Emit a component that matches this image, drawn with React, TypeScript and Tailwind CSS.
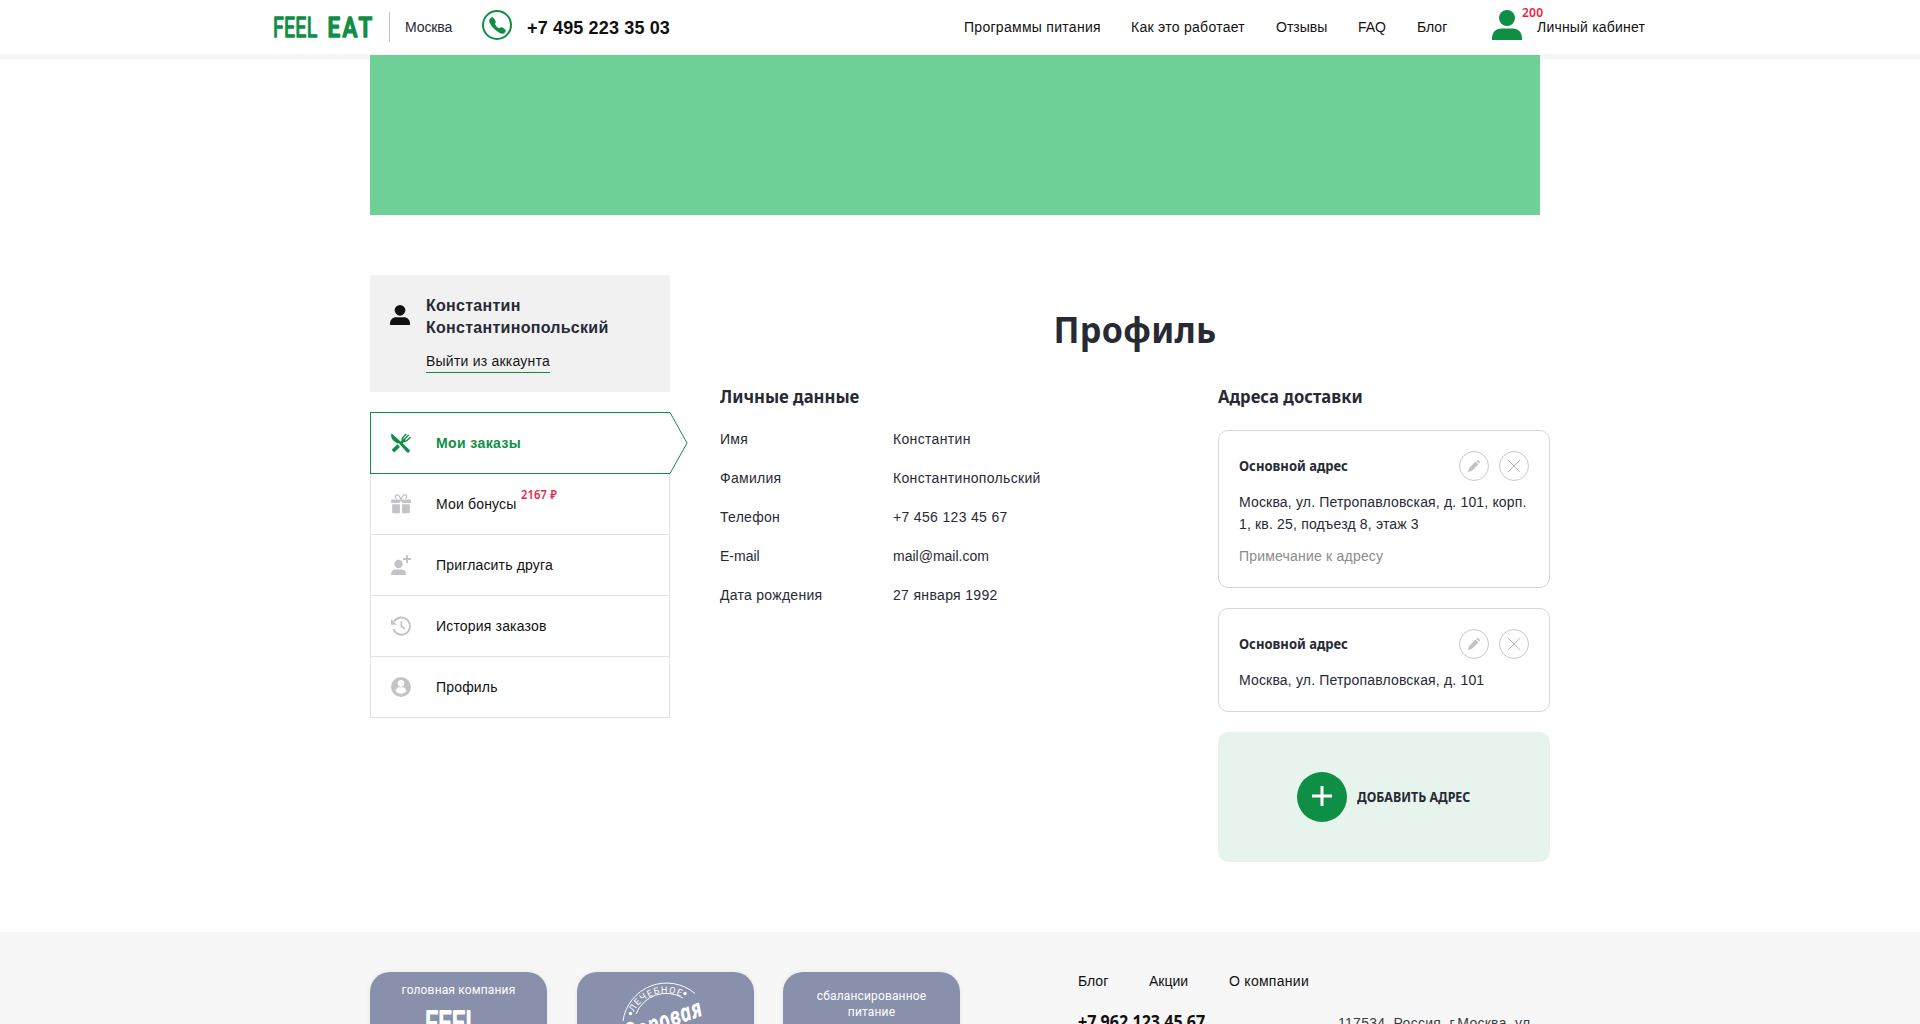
import React from "react";
import { IoCall } from "react-icons/io5";

function PersonIcon({ className }: { className: string }) {
  return (
    <svg viewBox="0 0 30 30" className={className} fill="currentColor">
      <circle cx="15" cy="8" r="8" />
      <path d="M0 30v-2c0-5.500 4-9.500 9-9.500h12c5 0 9 4 9 9.500v2z" />
    </svg>
  );
}

function CutleryIcon() {
  return (
    <svg viewBox="0 0 20 20" className="size-5" fill="none" stroke="currentColor" strokeLinecap="round">
      <path d="M.5.3c-.9 3.200.2 5.700 1.800 7.200l3.800 2.900 1.500-.4 8.300 9.300c1.400 1.300 3.900-1 2.600-2.600z" fill="currentColor" stroke="none" />
      <path d="M1.900 18.100l5.800-5.400" strokeWidth="3.700" strokeLinecap="butt" />
      <path d="M11 9l2-2" strokeWidth="2.800" />
      <path d="M14.800 1.200l-3.200 3.600c-.9 1.500.2 3.300 1.500 3.600 1.200.3 2 0 2.800-.8l3.300-3.200M17.300 2.300l-4 4.200" strokeWidth="1.400" />
    </svg>
  );
}

function GiftIcon() {
  return (
    <svg viewBox="0 0 20 20" className="size-5" fill="currentColor">
      <path d="M0 6.500C0 6 .4 5.600 1 5.600h18c.6 0 1 .4 1 .9V9h-8.800V7.500H8.800V9H0zM1.200 10.300h7.700v9H2.200c-.6 0-1-.4-1-1zM11.100 10.300h7.700v8c0 .6-.4 1-1 1h-6.700z" />
      <path d="M10 5.600C8.800 2.500 7.200.6 5.500 1c-1.800.5-1.500 3 .2 3.700M10 5.600C11.200 2.500 12.800.6 14.500 1c1.800.5 1.500 3-.2 3.700" fill="none" stroke="currentColor" strokeWidth="1.300" />
    </svg>
  );
}

function InviteIcon() {
  return (
    <svg viewBox="0 0 20 20" className="size-5" fill="currentColor">
      <circle cx="7.500" cy="9" r="4.200" />
      <path d="M0 20v-.8c0-2.800 2-4.700 4.500-4.700h6c2.500 0 4.500 1.900 4.500 4.700v.8zM15.100 0H17v3.100h3v1.900h-3V8h-1.900V5H12V3.100h3.100z" />
    </svg>
  );
}

function HistoryIcon() {
  return (
    <svg viewBox="0 0 20 20" className="size-5" fill="none" stroke="currentColor" strokeWidth="1.900">
      <path d="M3 5.700A8.600 8.600 0 1 1 2.400 13.200" />
      <path d="M10.300 5.300v5l3.600 2.400" strokeWidth="1.700" />
      <path d="M0 3l5.800 5.800H0z" fill="currentColor" stroke="none" />
    </svg>
  );
}

function ProfileIcon() {
  return (
    <svg viewBox="0 0 20 20" className="size-5">
      <circle cx="10" cy="10" r="10" fill="currentColor" />
      <circle cx="10" cy="6.400" r="3.300" fill="#fff" />
      <path d="M4.700 14.300c0-2.300 1.600-4 3.600-4h3.400c2 0 3.600 1.700 3.600 4-1.300 1.500-3.200 2.400-5.300 2.400s-4-.9-5.300-2.400z" fill="#fff" />
    </svg>
  );
}

function PencilButton() {
  return (
    <button className="flex size-[30px] items-center justify-center rounded-full border border-[#c8c8c8] text-[#c2c2c2]">
      <svg viewBox="0 0 12 12" className="size-3" fill="currentColor">
        <path d="M0 12l.9-3.700L7.600 1.600l2.800 2.800-6.700 6.700zM8.400.9l.6-.6c.4-.4.9-.4 1.300 0l1.400 1.400c.4.4.4.900 0 1.300l-.6.600z" />
      </svg>
    </button>
  );
}

function CloseButton() {
  return (
    <button className="flex size-[30px] items-center justify-center rounded-full border border-[#c8c8c8] text-[#bcbcbc]">
      <svg viewBox="0 0 12 12" className="size-3" fill="none" stroke="currentColor" strokeWidth="1">
        <path d="M0 0l12 12M12 0L0 12" />
      </svg>
    </button>
  );
}

function Heading({ children }: { children: React.ReactNode }) {
  return (
    <h2 className="origin-left scale-x-[0.95] font-['Noto_Sans',sans-serif] text-[17.5px] leading-6 font-bold tracking-normal whitespace-nowrap">
      {children}
    </h2>
  );
}

function AddressCard({ text, note }: { text: string; note?: string }) {
  return (
    <article className="rounded-[10px] border border-[#d6d6d6] p-5">
      <div className="flex items-center gap-2.5">
        <h3 className="mr-auto origin-left scale-x-[0.965] font-['Noto_Sans',sans-serif] text-[13.5px] leading-5 font-bold tracking-normal whitespace-nowrap">
          Основной адрес
        </h3>
        <PencilButton />
        <CloseButton />
      </div>
      <p className="mt-2.5 leading-[22px] tracking-[0.17px]">{text}</p>
      {note && <p className="mt-2.5 leading-[22px] tracking-[0.2px] text-[#8b8b8b]">{note}</p>}
    </article>
  );
}

const menu = [
  { label: "Мои бонусы", icon: <GiftIcon />, bonus: "2167 ₽" },
  { label: "Пригласить друга", icon: <InviteIcon /> },
  { label: "История заказов", icon: <HistoryIcon /> },
  { label: "Профиль", icon: <ProfileIcon /> },
];

const details = [
  ["Имя", "Константин"],
  ["Фамилия", "Константинопольский"],
  ["Телефон", "+7 456 123 45 67"],
  ["E-mail", "mail@mail.com"],
  ["Дата рождения", "27 января 1992"],
];

function Header() {
  return (
    <header className="flex h-[54px] items-center bg-white pl-[272px] whitespace-nowrap text-[#111]">
      <svg viewBox="0 0 104 34" className="h-[34px] w-[104px]" fill="#0f8f45" stroke="#0f8f45" strokeLinejoin="round" fontFamily="Roboto, sans-serif" fontSize="28">
        <text transform="translate(1 27) scale(.7 1)" strokeWidth="1.300">FEEL</text>
        <text transform="translate(55.500 27) scale(.8 1)" fontWeight="500" strokeWidth="1.600" letterSpacing="3">EAT</text>
      </svg>
      <div className="ml-[13px] h-[30px] w-px bg-[#c4c4c4]" />
      <span className="ml-[15px] w-[77px] tracking-[-0.1px] text-[#272a35]">Москва</span>
      <span className="mt-2.5 flex size-[30px] items-center justify-center self-start rounded-full border-2 border-[#0f8f45] text-[#0f8f45]">
        <IoCall className="size-[19px]" />
      </span>
      <span className="ml-[15px] w-[437px] pt-0.5 text-lg leading-6 font-bold tracking-[0.15px]">+7 495 223 35 03</span>
      <nav className="flex">
        <a className="w-[167px]">Программы питания</a>
        <a className="w-[145px]">Как это работает</a>
        <a className="w-[82px] tracking-normal">Отзывы</a>
        <a className="w-[59px] tracking-normal">FAQ</a>
        <a className="w-[75px] tracking-normal">Блог</a>
      </nav>
      <PersonIcon className="mt-2.5 size-[30px] self-start text-[#0f8f45]" />
      <a className="relative ml-[15px] tracking-[0.2px]">
        Личный кабинет
        <sup className="absolute -top-[12px] -left-[15px] font-['Noto_Sans',sans-serif] text-xs leading-4 font-semibold text-[#f0203f]">200</sup>
      </a>
    </header>
  );
}

function Sidebar() {
  return (
    <aside className="w-[300px] shrink-0">
      <div className="flex h-[117px] bg-[#f1f1f1] px-5 pt-5">
        <PersonIcon className="mt-2.5 size-5 text-[#111]" />
        <div className="ml-4">
          <p className="text-base leading-[22px] font-bold">Константин<br />Константинопольский</p>
          <a className="mt-3 inline-block border-b border-[#0f8f45] pb-px leading-5 tracking-[0.22px] text-[#171717]">Выйти из аккаунта</a>
        </div>
      </div>
      <div className="relative mt-5 flex h-[62px] items-center border border-r-0 border-[#0f8f45] pl-5 text-[#0f8f45]">
        <CutleryIcon />
        <span className="ml-[25px] font-bold tracking-[0.4px]">Мои заказы</span>
        <svg viewBox="0 0 18 62" className="absolute -top-px left-[299px] h-[62px] w-[18px]" fill="none" stroke="#0f8f45">
          <path d="M0 .5l17 30.500L0 61.500" />
        </svg>
      </div>
      {menu.map((item) => (
        <div key={item.label} className="flex h-[61px] items-center border border-t-0 border-[#e3e3e3] pl-5 text-[#c3c4c8]">
          {item.icon}
          <span className="relative ml-[25px] tracking-[0.17px] whitespace-nowrap text-[#111]">
            {item.label}
            {item.bonus && (
              <sup className="absolute -top-[7px] left-[85px] origin-left scale-x-[0.93] font-['Noto_Sans',sans-serif] text-xs leading-4 font-semibold text-[#e8274b]">
                {item.bonus}
              </sup>
            )}
          </span>
        </div>
      ))}
    </aside>
  );
}

function Profile() {
  return (
    <main className="ml-[50px] w-[830px] pt-[33px]">
      <h1 className="scale-x-[0.975] text-center font-['Noto_Sans',sans-serif] text-[35px] leading-[44px] font-bold tracking-[0.3px]">Профиль</h1>
      <div className="mt-8 flex">
        <section className="w-[498px]">
          <Heading>Личные данные</Heading>
          <dl className="mt-[21px] grid grid-cols-[173px_1fr] gap-y-[19px]">
            {details.map(([k, v]) => (
              <React.Fragment key={k}>
                <dt className={k === "E-mail" ? "tracking-normal" : ""}>{k}</dt>
                <dd className={k === "E-mail" ? "tracking-normal" : "tracking-[0.33px]"}>{v}</dd>
              </React.Fragment>
            ))}
          </dl>
        </section>
        <section className="w-[332px]">
          <Heading>Адреса доставки</Heading>
          <div className="mt-[22px] flex flex-col gap-5">
            <AddressCard text="Москва, ул. Петропавловская, д. 101, корп. 1, кв. 25, подъезд 8, этаж 3" note="Примечание к адресу" />
            <AddressCard text="Москва, ул. Петропавловская, д. 101" />
            <button className="flex h-[130px] items-center rounded-[10px] bg-[#e6f4ed] pl-[79px]">
              <span className="flex size-[50px] items-center justify-center rounded-full bg-[#0f8f45]">
                <svg viewBox="0 0 20 20" className="mb-[3px] size-5" stroke="#fff" strokeWidth="3">
                  <path d="M10 0v20M0 10h20" />
                </svg>
              </span>
              <span className="ml-2.5 origin-left scale-x-[0.92] font-['Noto_Sans',sans-serif] text-[13.5px] font-bold tracking-normal whitespace-nowrap">ДОБАВИТЬ АДРЕС</span>
            </button>
          </div>
        </section>
      </div>
    </main>
  );
}

function Footer() {
  return (
    <footer className="mt-[70px] flex h-[92px] items-start overflow-hidden bg-[#f7f7f7] pt-10 pl-[370px] text-[#111]">
      <div className="flex gap-[29.500px] text-center font-[Roboto,sans-serif] text-xs leading-4 tracking-[0.15px] text-white">
        <div className="h-[150px] w-[177px] rounded-[20px] bg-[#8990ac] pt-2.5 shadow-[0_0_5px_rgba(0,0,0,0.08)]">
          головная компания
          <svg viewBox="0 0 60 40" className="mx-auto mt-2.5 h-10 w-[60px] -translate-x-1" fill="#fff" stroke="#fff" strokeLinejoin="round" strokeWidth="1.800" fontFamily="Roboto, sans-serif" fontSize="33">
            <text transform="translate(0 26.500) scale(.72 1)">FEEL</text>
          </svg>
        </div>
        <div className="h-[150px] w-[177px] rounded-[20px] bg-[#8990ac] shadow-[0_0_5px_rgba(0,0,0,0.08)]">
          <svg viewBox="0 0 177 150" className="h-[150px] w-[177px]" fill="none" stroke="#fff">
            <path d="M46 49A44 44 0 0 1 118 21.500" strokeWidth="1" />
            <path d="M59 42A32.500 32.500 0 0 1 106 26" strokeWidth="1" />
            <path id="badge-arc" d="M55.500 43A36 36 0 0 1 118 36" stroke="none" />
            <g fill="#fff" stroke="none">
              <circle cx="53.500" cy="41.500" r="1.700" />
              <circle cx="108" cy="21.500" r="1.700" />
              <text fontFamily="Roboto, sans-serif" fontSize="9" letterSpacing="1.200" textAnchor="start">
                <textPath href="#badge-arc" startOffset="3">ЛЕЧЕБНОЕ</textPath>
              </text>
              <text transform="translate(42 74) rotate(-20) scale(.76 1)" fontFamily="'Open Sans', sans-serif" fontStyle="italic" fontWeight="700" fontSize="25" textAnchor="start">Здоровая</text>
            </g>
          </svg>
        </div>
        <div className="h-[150px] w-[177px] rounded-[20px] bg-[#8990ac] pt-4 shadow-[0_0_5px_rgba(0,0,0,0.08)]">
          сбалансированное
          <br />
          питание
        </div>
      </div>
      <div className="ml-[118px] w-[260px]">
        <nav className="-mt-px flex">
          <a className="w-[71px] tracking-normal">Блог</a>
          <a className="w-20 tracking-normal">Акции</a>
          <a>О компании</a>
        </nav>
        <p className="mt-[18px] origin-left scale-x-[0.92] font-['Noto_Sans',sans-serif] text-[17.5px] leading-6 font-bold tracking-normal whitespace-nowrap">+7 962 123 45 67</p>
      </div>
      <p className="mt-[41px] w-[200px] tracking-[0.27px] whitespace-nowrap text-[#3b3d45]">117534, Россия, г.Москва, ул.</p>
    </footer>
  );
}

export default function App() {
  return (
    <div className="h-[1024px] overflow-hidden bg-white font-['Liberation_Sans',Arial,sans-serif] text-sm leading-5 tracking-[0.02em] text-[#272a35]">
      <Header />
      <div className="bg-[linear-gradient(#f6f6f6_5px,#fcfcfc_5px,#fff_9px)] pt-px">
        <div className="ml-[370px] h-40 w-[1170px] bg-[#6ecf97]" />
      </div>
      <div className="flex pt-[60px] pl-[370px]">
        <Sidebar />
        <Profile />
      </div>
      <Footer />
    </div>
  );
}
